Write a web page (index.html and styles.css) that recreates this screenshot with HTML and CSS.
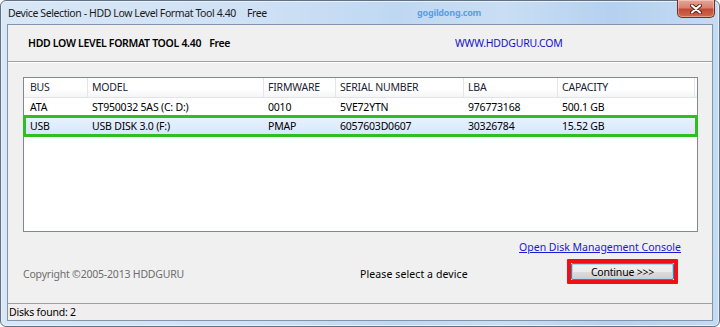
FILE: index.html
```html
<!DOCTYPE html>
<html lang="en">
<head>
  <meta charset="UTF-8">
  <meta name="viewport" content="width=device-width,initial-scale=1.0">
  <title>Device Selection</title>
  <link rel="stylesheet" href="styles.css">
</head>
<body>
  <div class="window">
    <div class="titlebar">
      <div class="title-group">
        <span class="title">Device Selection - HDD Low Level Format Tool 4.40</span>
        <span class="title-free">Free</span>
      </div>
      <span class="watermark">gogildong.com</span>
      <button class="close-btn" aria-label="Close">
        <svg width="12" height="10" viewBox="0 0 12 10">
          <path d="M2 1.5 L10 8.5 M10 1.5 L2 8.5" stroke="#5a1b12" stroke-width="4" stroke-linecap="round"/>
          <path d="M2 1.5 L10 8.5 M10 1.5 L2 8.5" stroke="#ffffff" stroke-width="2.2" stroke-linecap="round"/>
        </svg>
      </button>
    </div>

    <div class="client">
      <div class="banner">
        <div class="product">
          <span>HDD LOW LEVEL FORMAT TOOL 4.40</span>
          <span class="product-free">Free</span>
        </div>
        <a class="site-link">WWW.HDDGURU.COM</a>
      </div>

      <div class="content">
        <div class="listbox">
          <div class="row head">
            <span>BUS</span><span>MODEL</span><span>FIRMWARE</span><span>SERIAL NUMBER</span><span>LBA</span><span>CAPACITY</span>
          </div>
          <div class="row">
            <span>ATA</span><span>ST950032 5AS (C: D:)</span><span>0010</span><span>5VE72YTN</span><span>976773168</span><span>500.1 GB</span>
          </div>
          <div class="row selected">
            <span>USB</span><span>USB DISK 3.0 (F:)</span><span>PMAP</span><span>6057603D0607</span><span>30326784</span><span>15.52 GB</span>
          </div>
        </div>

        <div class="link-row">
          <a class="console-link">Open Disk Management Console</a>
        </div>

        <div class="action-row">
          <span class="copyright">Copyright ©2005-2013 HDDGURU</span>
          <span class="message">Please select a device</span>
          <span class="focus-box"><button class="continue-btn">Continue &gt;&gt;&gt;</button></span>
        </div>
      </div>

      <div class="statusbar">Disks found: 2</div>
    </div>
  </div>
</body>
</html>
```

FILE: styles.css
```css
    html, body {
      margin: 0;
      padding: 0;
      background: #ffffff;
    }

    body {
      width: 720px;
      height: 327px;
      overflow: hidden;
      font-family: "Noto Sans", "Open Sans", sans-serif;
      font-size: 10.5px;
      letter-spacing: -0.2px;
      color: #000;
    }

    .window {
      box-sizing: border-box;
      width: 720px;
      height: 327px;
      border: 1px solid #5f7288;
      border-radius: 6px;
      padding: 0 6px 5px 6px;
      display: flex;
      flex-direction: column;
      background: linear-gradient(to right, #d9e7f6 0%, #cfe1f5 35%, #bfd8f2 55%, #c9def4 70%, #b5d1ef 85%, #c4dbf3 100%);
      box-shadow: inset 0 0 0 1px #e8f1fb;
    }

    /* title bar */
    .titlebar {
      height: 23px;
      display: flex;
      align-items: center;
      color: #1a1a1a;
    }
    .title-group {
      width: 410px;
      padding-left: 1px;
      box-sizing: border-box;
      display: flex;
      gap: 11px;
      letter-spacing: -0.4px;
    }
    .watermark {
      color: #5b9ee3;
      font-weight: 700;
      font-size: 9px;
    }
    .close-btn {
      margin-left: auto;
      margin-right: -2px;
      align-self: flex-start;
      margin-top: -1px;
      width: 38px;
      height: 18px;
      padding: 0;
      display: flex;
      align-items: center;
      justify-content: center;
      border: 1px solid #7d2a1e;
      border-top: none;
      border-radius: 0 0 5px 5px;
      background: linear-gradient(#e7a596 0%, #d7826f 45%, #c24a34 55%, #cf6a50 100%);
      box-shadow: inset 0 0 0 1px rgba(255,255,255,0.35);
    }

    /* client area */
    .client {
      flex: 1;
      display: flex;
      flex-direction: column;
      background: #f0f0f0;
      border: 1px solid #8195ad;
    }

    .banner {
      height: 36px;
      display: flex;
      align-items: center;
      border-bottom: 1px solid #a0a0a0;
      box-shadow: 0 1px 0 #ffffff;
    }
    .product {
      width: 447px;
      padding-left: 20px;
      box-sizing: border-box;
      font-weight: 600;
      letter-spacing: -0.3px;
      display: flex;
      gap: 8px;
    }
    .site-link {
      color: #1212cc;
    }

    .content {
      padding: 15px 14px 0 15px;
    }

    /* device list */
    .listbox {
      height: 155px;
      box-sizing: border-box;
      border: 1px solid #828790;
      background: #fff;
    }
    .row {
      display: grid;
      grid-template-columns: 64px 176px 72px 128px 94px 1fr;
      height: 18px;
      align-items: center;
      position: relative;
    }
    .row span {
      padding-left: 4px;
      white-space: nowrap;
      line-height: 19px;
    }
    .row span:first-child {
      padding-left: 6px;
    }
    .row.head {
      height: 19px;
      color: #1b2433;
      background: linear-gradient(#ffffff 0%, #ffffff 60%, #f4f5f7 100%);
      border-bottom: 1px solid #e2e4e8;
    }
    .row.head span {
      border-right: 1px solid #e3e5e9;
      height: 19px;
      line-height: 19px;
      box-sizing: border-box;
    }
    .row.head span:last-child {
      margin-right: 2px;
    }
    .row.selected {
      margin-top: 1px;
      background: linear-gradient(#e9f2fd 0%, #d6e7fb 100%);
      box-shadow: inset 0 0 0 1px #a9c8ec;
    }
    .row.selected::after {
      content: "";
      position: absolute;
      top: -2px;
      bottom: -2px;
      left: -1px;
      right: -1px;
      border: 3px solid #2fbf23;
    }

    /* footer */
    .link-row {
      display: flex;
      justify-content: flex-end;
      padding-right: 17px;
      margin-top: 7px;
      height: 16px;
      line-height: 16px;
    }
    .console-link {
      color: #1a1ad4;
      text-decoration: underline;
      letter-spacing: 0;
    }

    .action-row {
      display: flex;
      align-items: center;
      margin-top: 4px;
    }
    .copyright {
      width: 337px;
      color: #6d6d6d;
      padding-top: 5px;
    }
    .message {
      flex: 1;
      padding-top: 5px;
      letter-spacing: 0.1px;
    }
    .focus-box {
      margin-right: 20px;
      border: 4px solid #ef0f14;
      border-radius: 1px;
      display: flex;
    }
    .continue-btn {
      width: 103px;
      height: 17px;
      padding: 0;
      font-family: inherit;
      font-size: 10.5px;
      letter-spacing: -0.2px;
      color: #000;
      border: 1px solid #3c7fb1;
      border-radius: 2px;
      background: linear-gradient(#f2f2f2 0%, #ebebeb 50%, #dddddd 51%, #cfcfcf 100%);
      box-shadow: inset 0 0 0 1px #a6d8f0;
    }

    .statusbar {
      margin-top: auto;
      height: 16px;
      line-height: 17px;
      border-top: 1px solid #a0a0a0;
      background: #f0eeee;
      padding-left: 1px;
    }
```
